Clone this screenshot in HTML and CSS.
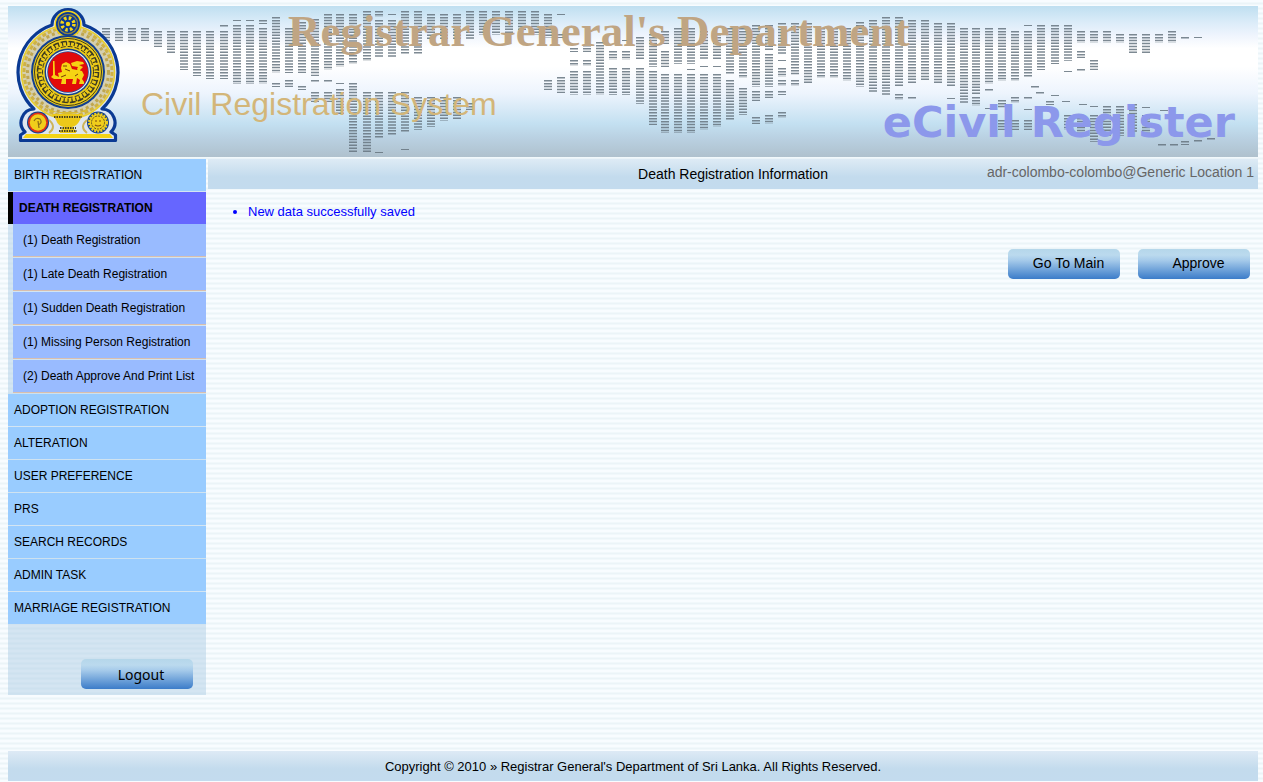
FILE: index.html
```html
<!DOCTYPE html>
<html lang="en">
<head>
<meta charset="utf-8">
<title>eCivil Register</title>
<link rel="stylesheet" href="styles.css">
</head>
<body>
<header class="banner">
  <svg class="banner-map" viewBox="8 6 1250 151" preserveAspectRatio="none" aria-hidden="true">
    <path d="M106 28V41M119 28V41M132 28V41M145 28V41M158 31V47M171 31V53M184 31V70M197 31V76M210 31V79M224 25V27M224 31V79M237 20V21M237 25V84M250 20V21M250 25V84M263 20V24M263 28V84M276 17V73M276 83V87M289 28V73M289 80V87M302 22V73M302 86V90M315 19V76M315 80V82M315 92V102M328 14V70M328 80V83M328 92V102M340 14V67M340 83V84M340 89V115M353 14V64M353 83V152M367 11V61M367 92V153M379 11V17M379 20V58M379 92V139M379 152V153M392 14V15M392 20V58M392 92V136M405 11V55M405 92V133M405 149V150M418 11V55M418 97V130M431 14V40M431 97V127M444 14V40M444 97V121M457 14V40M457 97V119M470 11V40M470 103V110M483 11V35M496 11V35M509 11V35M522 11V30M535 11V35M548 14V38M548 80V90M561 14V15M561 34V38M561 77V93M574 48V52M574 60V66M574 71V95M587 45V52M587 60V66M587 71V95M600 42V95M613 51V60M613 68V95M626 40V41M626 51V60M626 68V95M640 37V60M640 68V104M653 34V67M653 71V125M665 31V44M665 51V67M665 74V133M678 28V64M678 74V133M691 28V64M691 69V70M691 74V133M704 31V60M704 66V67M704 74V130M717 34V60M717 66V67M717 74V127M730 28V75M730 80V121M743 28V78M743 88V115M756 25V87M756 91V101M756 117V124M769 25V50M769 54V87M769 91V98M769 115V124M782 23V55M782 60V61M782 68V77M782 80V86M782 91V95M782 112V118M795 23V75M795 80V86M808 23V84M821 28V78M834 28V78M847 28V81M860 22V87M873 20V92M886 17V95M899 17V87M899 94V100M912 20V84M912 97V100M925 20V81M938 23V84M951 23V87M951 98V99M964 28V104M976 28V94M976 97V106M989 28V84M989 89V92M989 108V109M1002 28V81M1002 100V108M1002 120V130M1015 31V81M1015 97V103M1015 120V130M1028 25V26M1028 31V78M1028 97V100M1028 109V110M1028 120V130M1035 86V89M1040 92V95M1055 95V96M1050 101V105M1066 101V102M1083 104V105M1041 25V70M1055 25V64M1068 25V61M1068 71V72M1068 115V130M1081 31V43M1081 51V58M1081 69V72M1081 115V133M1094 31V43M1094 60V70M1094 106V107M1094 115V142M1107 31V43M1107 106V136M1120 34V43M1120 106V136M1133 34V53M1133 104V133M1146 34V53M1146 107V108M1146 115V133M1159 34V43M1162 144V147M1172 31V43M1164 110V111M1174 144V147M1185 37V40M1185 141V145M1198 37V38M1198 140V143M1211 138V141"/>
  </svg>
  <svg class="emblem" viewBox="16 7 104 136" role="img" aria-label="Emblem of Sri Lanka">
    <path d="M52 25A16 15.500 0 0 1 84 25A50 50 0 0 1 102 109A13.500 13.500 0 0 1 111 132L115.500 135V140.500H20.500V135L25 132A13.500 13.500 0 0 1 34 109A50 50 0 0 1 52 25Z" fill="#dfe7f0" stroke="#0b3a93" stroke-width="3.200" stroke-linejoin="round"/>
    <circle cx="68" cy="72" r="42" fill="none" stroke="#d5cfae" stroke-width="10"/>
    <circle cx="68" cy="72" r="44" fill="none" stroke="#cfb244" stroke-width="3" stroke-dasharray="4 2"/>
    <circle cx="68" cy="72" r="40.500" fill="none" stroke="#bfa650" stroke-width="3" stroke-dasharray="3 3"/>
    <circle cx="68" cy="72" r="46.500" fill="none" stroke="#e8cf2e" stroke-width="1.500"/>
    <circle cx="68" cy="24" r="13.500" fill="#f4d415"/>
    <circle cx="68" cy="24" r="12" fill="#0b3a93"/>
    <circle cx="68" cy="24" r="10.300" fill="#8f8640"/>
    <circle cx="68" cy="24" r="9" fill="#0b3a93"/>
    <circle cx="68" cy="24" r="6" fill="none" stroke="#f4d415" stroke-width="3.500" stroke-dasharray="2.500 2.212"/>
    <circle cx="68" cy="24" r="2.200" fill="#f4d415"/>
    <circle cx="68" cy="72" r="37" fill="#13408d"/>
    <circle cx="68" cy="72" r="35" fill="#ecca18"/>
    <circle cx="68" cy="72" r="33.500" fill="none" stroke="#3c3b22" stroke-width="1"/>
    <circle cx="68" cy="72" r="30.500" fill="none" stroke="#3c3b22" stroke-width="1.500" stroke-dasharray="6 2"/>
    <circle cx="68" cy="72" r="28.500" fill="none" stroke="#3c3b22" stroke-width="4" stroke-dasharray="1.200 2.800"/>
    <circle cx="68" cy="72" r="25.500" fill="none" stroke="#3c3b22" stroke-width="1" stroke-dasharray="5 2"/>
    <circle cx="68" cy="72" r="23.500" fill="#13408d"/>
    <circle cx="68" cy="72" r="22" fill="#eef2f7"/>
    <circle cx="68" cy="72" r="20.800" fill="#2d4f98"/>
    <circle cx="68" cy="72" r="20" fill="#e20a0a"/>
    <path d="M53 61L54.500 61 55 75 59 77 58 73 62 72 61 68 62 64 66 62 70 64 72 69 82 71 84 75 82 79 84 82 84 84 79 84 80 80 77 78 76 84 72 84 73 79 66 79 66 84 61 84 62 79 54 79 51 77 53 75ZM71 63L77 61 83 62 84 64 79 65 83 67 80 70 82 74 80 74 77 69 78 67 72 66Z" fill="#f6d313"/>
    <path d="M63 66H67M65 69L70 71M61 77L66 75M75 76L78 74" stroke="#7b3d08" stroke-width="1" fill="none"/>
    <path d="M48 108Q68 120 88 108L86 112H50Z" fill="#d9bc31"/>
    <path d="M52 114H83L80 120Q77 126 72 127L76 131V133H60V131L64 127Q58 126 56 120Z" fill="#ecc91a"/>
    <path d="M54 117H82M60 128H76M59 131H77" stroke="#4b431f" stroke-width="2" stroke-dasharray="1.500 1" fill="none"/>
    <path d="M49 133Q57 127 49 120M87 133Q79 127 87 120" fill="none" stroke="#cdb45a" stroke-width="2"/>
    <circle cx="38" cy="122.500" r="11" fill="#13408d"/>
    <circle cx="38" cy="122.500" r="10" fill="#e0301a"/>
    <circle cx="38" cy="122.500" r="8.200" fill="#f0ce1b"/>
    <path d="M34 121Q36 117 40 119Q43 123 38 125M38 121L39 128" fill="none" stroke="#8a6b16" stroke-width="1.200"/>
    <circle cx="98" cy="122.500" r="11" fill="#13408d"/>
    <circle cx="98" cy="122.500" r="8.500" fill="#f0ce1b"/>
    <circle cx="98" cy="122.500" r="9" fill="none" stroke="#f0ce1b" stroke-width="2" stroke-dasharray="2 1.200"/>
    <circle cx="98" cy="122.500" r="6.500" fill="none" stroke="#5b5120" stroke-width="1" stroke-dasharray="2 1"/>
    <path d="M95 121H97M99 121H101M95 125Q98 127 101 125" fill="none" stroke="#7a4a12" stroke-width="1.200"/>
    <path d="M26 134H110L113 138H23Z" fill="#f4d415"/>
  </svg>
  <h1 class="banner-title">Registrar General's Department</h1>
  <p class="banner-system">Civil Registration System</p>
  <p class="banner-product">eCivil Register</p>
</header>
<div class="layout">
  <nav class="sidebar" aria-label="Main menu">
    <a class="menu-item" href="#">BIRTH REGISTRATION</a>
    <a class="menu-item menu-item-active" href="#">DEATH REGISTRATION</a>
    <div class="submenu">
      <a class="submenu-item" href="#">(1) Death Registration</a>
      <a class="submenu-item" href="#">(1) Late Death Registration</a>
      <a class="submenu-item" href="#">(1) Sudden Death Registration</a>
      <a class="submenu-item" href="#">(1) Missing Person Registration</a>
      <a class="submenu-item" href="#">(2) Death Approve And Print List</a>
    </div>
    <a class="menu-item" href="#">ADOPTION REGISTRATION</a>
    <a class="menu-item" href="#">ALTERATION</a>
    <a class="menu-item" href="#">USER PREFERENCE</a>
    <a class="menu-item" href="#">PRS</a>
    <a class="menu-item" href="#">SEARCH RECORDS</a>
    <a class="menu-item" href="#">ADMIN TASK</a>
    <a class="menu-item" href="#">MARRIAGE REGISTRATION</a>
    <div class="logout">
      <button class="button button-logout" type="button">Logout</button>
    </div>
  </nav>
  <main class="content">
    <div class="title-bar">
      <h2 class="page-title">Death Registration Information</h2>
      <span class="user">adr-colombo-colombo@Generic Location 1</span>
    </div>
    <ul class="messages">
      <li>New data successfully saved</li>
    </ul>
    <div class="actions">
      <button class="button" type="button">Go To Main</button>
      <button class="button" type="button">Approve</button>
    </div>
  </main>
</div>
<footer class="footer">Copyright © 2010 » Registrar General's Department of Sri Lanka. All Rights Reserved.</footer>
</body>
</html>
```
FILE: styles.css
```css
* {
  box-sizing: border-box;
}

body {
  display: flex;
  flex-direction: column;
  min-height: 100vh;
  margin: 0;
  padding: 6px 5px 1px 8px;
  font-family: "Liberation Sans", Arial, sans-serif;
  font-size: 13px;
  color: #000;
  background: repeating-linear-gradient(#f8fcff 0 2px, #f1f8fb 2px 3px, #ebf4f8 3px 4px, #f1f8fb 4px 5px);
}

.banner {
  position: relative;
  display: grid;
  grid-template-columns: 104px 1fr auto;
  grid-template-rows: 76px 1fr;
  height: 151px;
  padding: 0 23px 0 8px;
  background: linear-gradient(#bfdff0 0, #d9ebf8 10%, #eef4fd 19%, #fff 28%, #fff 40%, #edf4fd 58%, #c3e0f1 78%, #b9d0e1 88%, #afc1cd 100%);
}

.banner-map {
  position: absolute;
  inset: 0;
  width: 100%;
  height: 100%;
}

.banner-map path {
  fill: none;
  stroke: #66747f;
  stroke-width: 8;
  stroke-dasharray: 1.5 1.43;
  opacity: 0.85;
}

.emblem {
  position: relative;
  grid-row: 1 / 3;
  width: 104px;
  height: 136px;
  margin-top: 1px;
}

.banner-title,
.banner-system,
.banner-product {
  position: relative;
  margin: 0;
  white-space: nowrap;
}

.banner-title {
  grid-column: 2 / 4;
  padding-left: 168px;
  font: bold 45px/50px "Liberation Serif", "Times New Roman", serif;
  color: #c0a583;
}

.banner-system {
  grid-column: 2;
  padding-left: 21px;
  font-size: 32px;
  line-height: 44px;
  color: #d3b679;
}

.banner-product {
  font: bold 43px/50px "DejaVu Sans", Verdana, sans-serif;
  padding-top: 15px;
  color: #8c98eb;
}

.layout {
  display: flex;
  align-items: flex-start;
  gap: 2px;
  margin-top: 2px;
}

.sidebar {
  flex: none;
  width: 198px;
  background: rgba(176, 205, 229, 0.5);
}

.menu-item,
.submenu-item {
  display: block;
  font-size: 12px;
  line-height: 32px;
  color: #000;
  text-decoration: none;
}

.menu-item {
  margin-bottom: 1px;
  padding-left: 6px;
  background: #99ccff;
}

.menu-item-active {
  margin-bottom: 0;
  border-left: 5px solid #000;
  font-weight: bold;
  background: #6666ff;
}

.submenu {
  padding-left: 5px;
}

.submenu-item {
  margin-bottom: 1px;
  padding-left: 10px;
  border-bottom: 1px solid #d9bfae;
  background: #99bbff;
}

.logout {
  display: flex;
  justify-content: flex-end;
  padding: 34px 13px 6px;
}

.button {
  width: 112px;
  height: 30px;
  padding: 0 14px 2px 23px;
  border: 0;
  border-radius: 5px;
  font: 14px "Liberation Sans", Arial, sans-serif;
  color: #000;
  white-space: nowrap;
  background: linear-gradient(#b5d7ea 0, #bbdaee 20%, #a5caea 38%, #3b7cc9 100%);
}

.button-logout {
  padding: 0 0 0 8px;
  font-family: "Noto Sans", sans-serif;
}

.content {
  flex: 1;
}

.title-bar {
  display: grid;
  grid-template-columns: 1fr auto 1fr;
  height: 30px;
  line-height: 30px;
  background: linear-gradient(#deebf5, #c3dbed 60%, #c3dbee);
}

.page-title {
  grid-column: 2;
  margin: 0;
  font-size: 14px;
  font-weight: normal;
}

.user {
  padding-right: 4px;
  font-size: 14px;
  line-height: 26px;
  text-align: right;
  color: #666;
}

.messages {
  margin: 15px 0 0;
  padding-left: 40px;
  line-height: 16px;
  color: #0000ff;
}

.actions {
  display: flex;
  justify-content: flex-end;
  gap: 18px;
  margin-top: 29px;
  padding-right: 8px;
}

.footer {
  height: 30px;
  margin-top: auto;
  line-height: 31px;
  text-align: center;
  background: linear-gradient(#deeaf5, #c3dbed 60%, #c3dbee);
}
```
